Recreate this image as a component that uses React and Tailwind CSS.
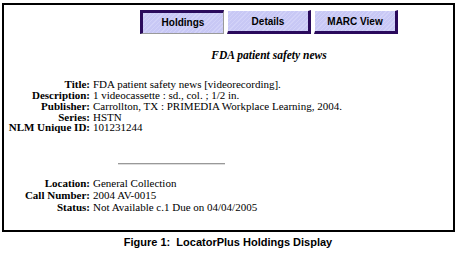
import React from 'react'

const rows1 = [
  ['Title:', 'FDA patient safety news [videorecording].'],
  ['Description:', '1 videocassette : sd., col. ; 1/2 in.'],
  ['Publisher:', 'Carrollton, TX : PRIMEDIA Workplace Learning, 2004.'],
  ['Series:', 'HSTN'],
  ['NLM Unique ID:', '101231244'],
]

const rows2 = [
  ['Location:', 'General Collection'],
  ['Call Number:', '2004 AV-0015'],
  ['Status:', 'Not Available c.1 Due on 04/04/2005'],
]

const serif = { fontFamily: '"Liberation Serif", "DejaVu Serif", serif' }
const sans = { fontFamily: '"Liberation Sans", Arial, sans-serif' }

function Row({ label, value, tall }) {
  return (
    <div className={`flex items-center text-[11px] leading-none text-black ${tall ? 'h-[12px]' : 'h-[10.75px]'}`}>
      <span className="w-[86px] shrink-0 text-right font-bold">{label}</span>
      <span className="ml-[3px] whitespace-nowrap">{value}</span>
    </div>
  )
}

function Tab({ label, pressed }) {
  return (
    <div
      className={`flex h-[24px] w-[84px] border border-black text-[10px] font-bold text-black ${
        pressed
          ? 'border-t-[3px] border-l-[3px] border-t-[#2a0a5c] border-l-[#2a0a5c] border-b-[#9a9a9a] border-r-[#9a9a9a]'
          : 'border-b-[3px] border-r-[3px] border-b-[#2a0a5c] border-r-[#2a0a5c] border-t-white border-l-white'
      }`}
      style={sans}
    >
      <div
        className={`flex h-full w-full items-center justify-center bg-[repeating-linear-gradient(135deg,#c8c8f5_0px,#c8c8f5_2px,#d2d2f8_2px,#d2d2f8_3px)] ${
          pressed ? 'pb-[2px]' : 'pt-[1px]'
        }`}
      >
        {label}
      </div>
    </div>
  )
}

export default function App() {
  return (
    <div className="h-[257px] w-[456px] overflow-hidden bg-white">
      <div className="ml-[2px] mt-[3px] h-[229px] w-[453px] border-2 border-black" style={serif}>
        <div className="ml-[136px] mt-[5px] flex gap-[3px]">
          <Tab label="Holdings" pressed />
          <Tab label="Details" />
          <Tab label="MARC View" />
        </div>
        <div className="mt-[16px] pl-[81px] text-center text-[11.5px] font-bold italic leading-none text-black">
          FDA patient safety news
        </div>
        <div className="mt-[18px] flex flex-col">
          {rows1.map(([l, v]) => (
            <Row key={l} label={l} value={v} />
          ))}
        </div>
        <div className="ml-[114px] mt-[30px] h-[2px] w-[107px] border-t border-b border-t-[#999] border-b-[#ddd]" />
        <div className="mt-[12px] flex flex-col">
          {rows2.map(([l, v]) => (
            <Row key={l} label={l} value={v} tall />
          ))}
        </div>
      </div>
      <div className="mt-[3.5px] text-center text-[11px] font-bold leading-[13px] text-black" style={sans}>
        Figure 1:&nbsp; LocatorPlus Holdings Display
      </div>
    </div>
  )
}
